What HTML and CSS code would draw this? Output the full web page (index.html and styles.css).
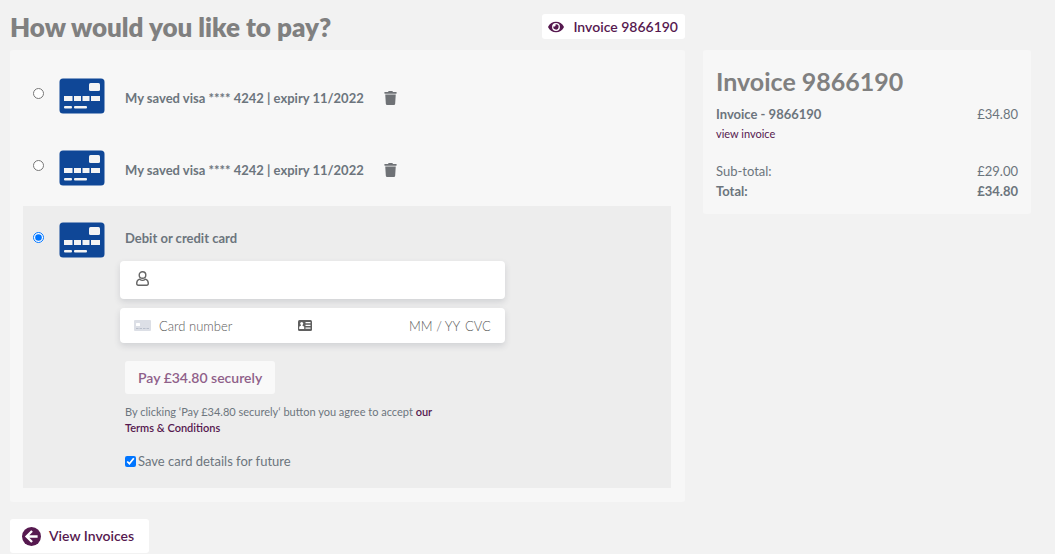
FILE: index.html
```html
<!DOCTYPE html>
<html lang="en">
<head>
  <meta charset="UTF-8" />
  <meta name="viewport" content="width=device-width, initial-scale=1.0" />
  <title>Pay invoice</title>
  <link rel="stylesheet" href="styles.css">
</head>
<body>
  <!-- shared icons -->
  <svg class="sprite" aria-hidden="true">
    <symbol id="icon-card" viewBox="0 0 46 36">
      <rect x="0.5" y="0.5" width="45" height="35" rx="3.5" fill="#0f4797" />
      <rect x="30" y="5" width="11" height="8" rx="1.5" fill="#f4f4f4" />
      <path d="M5 18h8.5v5H5zM15 18h7v5h-7zM23.500 18h7v5h-7zM32 18h9v5h-9z" fill="#f4f4f4" />
      <rect x="5" y="28" width="8" height="2.500" rx="1" fill="#f4f4f4" />
      <rect x="15" y="28" width="13" height="2.500" rx="1" fill="#f4f4f4" />
    </symbol>
    <symbol id="icon-trash" viewBox="0 0 448 512">
      <path fill="currentColor" d="M432 32H312l-9.400-18.700A24 24 0 0 0 281.100 0H166.800a23.720 23.720 0 0 0-21.400 13.300L136 32H16A16 16 0 0 0 0 48v32a16 16 0 0 0 16 16h416a16 16 0 0 0 16-16V48a16 16 0 0 0-16-16zM32 128l21.200 339a48 48 0 0 0 47.900 45h245.800a48 48 0 0 0 47.900-45L416 128z" />
    </symbol>
  </svg>

  <main class="page">
    <section class="payment">
      <header class="payment-header">
        <h1>How would you like to pay?</h1>
        <a href="#" class="btn btn-invoice">
          <svg class="icon-eye" viewBox="0 0 576 512" aria-hidden="true">
            <path fill="currentColor" d="M572.520 241.400C518.290 135.590 410.930 64 288 64S57.680 135.640 3.480 241.410a32.350 32.350 0 0 0 0 29.190C57.710 376.410 165.070 448 288 448s230.320-71.640 284.520-177.410a32.350 32.350 0 0 0 0-29.190zM288 400a144 144 0 1 1 144-144 143.930 143.930 0 0 1-144 144zm0-240a95.310 95.310 0 0 0-25.310 3.790 47.850 47.850 0 0 1-66.900 66.900A95.780 95.780 0 1 0 288 160z" />
          </svg>
          Invoice 9866190
        </a>
      </header>

      <form class="panel methods">
        <div class="method">
          <input type="radio" name="method" id="saved-1">
          <svg class="card-icon" aria-hidden="true"><use href="#icon-card" /></svg>
          <div class="method-body saved">
            <label for="saved-1">My saved visa **** 4242 | expiry 11/2022</label>
            <button type="button" class="delete" aria-label="Delete card"><svg><use href="#icon-trash" /></svg></button>
          </div>
        </div>

        <div class="method">
          <input type="radio" name="method" id="saved-2">
          <svg class="card-icon" aria-hidden="true"><use href="#icon-card" /></svg>
          <div class="method-body saved">
            <label for="saved-2">My saved visa **** 4242 | expiry 11/2022</label>
            <button type="button" class="delete" aria-label="Delete card"><svg><use href="#icon-trash" /></svg></button>
          </div>
        </div>

        <div class="method active">
          <input type="radio" name="method" id="new-card" checked>
          <svg class="card-icon" aria-hidden="true"><use href="#icon-card" /></svg>
          <div class="method-body">
            <label for="new-card" class="method-title">Debit or credit card</label>

            <div class="field field-name">
              <svg class="icon-user" viewBox="0 0 13 15" aria-hidden="true" fill="none" stroke="#666" stroke-width="1.4">
                <circle cx="6.500" cy="4" r="3.300" />
                <path d="M3.600 8.200C1.700 8.900.7 10.400.7 12.300c0 1.400.5 2 1.700 2h8.200c1.200 0 1.700-.6 1.700-2 0-1.900-1-3.400-2.900-4.100-1.700 1.400-4.100 1.400-5.800 0z" />
              </svg>
              <input type="text" aria-label="Name on card">
            </div>

            <div class="field field-card">
              <svg class="icon-mini-card" viewBox="0 0 17 11" aria-hidden="true">
                <rect width="17" height="11" rx="1" fill="#dcdfe6" />
                <rect x="2" y="3" width="4" height="3" rx="0.500" fill="#fff" />
                <path d="M2 8.500h13" stroke="#b9bfcc" stroke-dasharray="2.500 1" />
              </svg>
              <input type="text" class="number" placeholder="Card number" aria-label="Card number">
              <svg class="icon-id" viewBox="0 0 14 11" aria-hidden="true">
                <rect width="14" height="11" rx="1.500" fill="#5f5f5f" />
                <circle cx="3.700" cy="3.500" r="1.500" fill="#fff" />
                <path d="M3 4h1.400v1.600l1.800 1.200V9H1.200V6.800L3 5.600zM7.500 2h5v1.200h-5zM7.500 4.800h5V6h-5zM7.500 7.600h5v1.200h-5z" fill="#fff" />
              </svg>
              <input type="text" class="expiry" placeholder="MM / YY" aria-label="Expiry date">
              <input type="text" class="cvc" placeholder="CVC" aria-label="CVC">
            </div>

            <button type="submit" class="btn btn-pay" disabled>Pay £34.80 securely</button>
            <p class="terms">By clicking ‘Pay £34.80 securely‘ button you agree to accept <a href="#">our Terms &amp; Conditions</a></p>
            <div class="save">
              <input type="checkbox" id="save-card" checked>
              <label for="save-card">Save card details for future</label>
            </div>
          </div>
        </div>
      </form>

      <a href="#" class="btn btn-back">
        <svg class="icon-back" viewBox="0 0 18 18" aria-hidden="true">
          <circle cx="9" cy="9" r="9" fill="#56194f" />
          <path d="M9.500 3.800L4.300 9l5.200 5.200M4.800 9h10" fill="none" stroke="#fff" stroke-width="2.200" />
        </svg>
        View Invoices
      </a>
    </section>

    <aside class="panel summary">
      <h2>Invoice 9866190</h2>
      <div class="line"><strong>Invoice - 9866190</strong><span>£34.80</span></div>
      <a href="#" class="view">view invoice</a>
      <div class="line"><span>Sub-total:</span><span>£29.00</span></div>
      <div class="line"><strong>Total:</strong><strong>£34.80</strong></div>
    </aside>
  </main>
</body>
</html>
```
FILE: styles.css
```css
* { box-sizing: border-box; }
body {
  font-family: Lato, "Open Sans", sans-serif;
  font-size: 14px;
  line-height: 20px;
  margin: 0;
  background-color: #f2f2f2;
  color: #6c757d;
}
h1, h2, p { margin: 0; }
h1, h2 { color: #808080; }
a { color: #56194f; text-decoration: none; }
strong { font-weight: 700; }
input { font-family: inherit; margin: 0; }
.sprite { display: none; }

.page {
  display: grid;
  grid-template-columns: minmax(0, 1fr) 328px;
  align-items: start;
  gap: 18px;
  padding: 0 24px 0 10px;
}
.panel { background-color: #f7f7f7; border-radius: 3px; }

/* buttons */
.btn {
  display: inline-flex;
  align-items: center;
  background-color: #fff;
  color: #56194f;
  border: 0;
  border-radius: 3px;
  font-family: inherit;
  font-size: 14px;
  font-weight: 600;
}
.btn-invoice { height: 25px; padding: 0 7px 0 6px; gap: 9px; }
.icon-eye { width: 16px; height: 14px; }
.btn-back { height: 34px; padding: 0 15px 0 12px; gap: 8px; margin-top: 17px; }
.icon-back { width: 19px; height: 19px; }
.btn-pay {
  height: 33px;
  padding: 0 13px;
  margin: 18px 0 0 5px;
  background-color: #f9f9f9;
  color: #8f6089;
}

/* payment methods */
.payment-header {
  display: flex;
  justify-content: space-between;
  align-items: center;
  height: 50px;
  padding-top: 3px;
}
h1 { font-size: 26px; line-height: 34px; font-weight: 800; }
.methods { padding: 12px 14px 14px 13px; }
.method {
  display: flex;
  align-items: flex-start;
  min-height: 72px;
  padding: 16px 10px 0;
}
.method.active { background-color: #ededed; padding-bottom: 17px; }
input[type="radio"], input[type="checkbox"] { width: 11px; height: 11px; flex: none; }
.method > input { margin-top: 10px; }
.card-icon { width: 46px; height: 36px; margin: 0 15px; flex: none; }
.method-body { flex: 1; }
.method-body > label { font-weight: 700; padding-left: 5px; font-size: 13px; }
.saved { display: flex; align-items: center; padding-top: 10px; gap: 20px; }
.delete {
  display: flex;
  padding: 0;
  border: 0;
  background: none;
  color: #6f7276;
}
.delete svg { width: 13px; height: 14px; }
.method-title { display: block; padding-top: 6px; }

.field {
  display: flex;
  align-items: center;
  width: 100%;
  max-width: 385px;
  padding: 0 14px;
  background-color: #fff;
  border-radius: 4px;
  box-shadow: 0 3px 6px rgba(60, 66, 87, 0.16);
}
.field input {
  border: 0;
  padding: 0;
  background: none;
  font-size: 13px;
  font-weight: 300;
  min-width: 0;
  outline: none;
}
.field input::placeholder { color: #5c5c5c; opacity: 1; }
.field-name { height: 38px; margin-top: 13px; padding: 0 16px 4px; gap: 10px; }
.field-name input { flex: 1; }
.field-card { height: 35px; margin-top: 9px; }
.icon-user { width: 13px; height: 15px; }
.icon-mini-card { width: 17px; height: 11px; margin-right: 8px; }
.icon-id { width: 14px; height: 11px; margin-right: auto; }
.number { width: 139px; }
.expiry { width: 52px; margin-right: 4px; }
.cvc { width: 26px; }

.terms { max-width: 330px; padding-left: 5px; margin-top: 10px; font-size: 11px; line-height: 16px; }
.terms a { font-weight: 600; }
.save { display: flex; align-items: center; gap: 2px; margin-top: 15px; padding-left: 5px; font-size: 13px; }

/* invoice summary */
.summary { margin-top: 50px; padding: 13px 13px 13px; font-size: 13px; }
.summary h2 { font-size: 25px; line-height: 36px; font-weight: 700; margin-bottom: 5px; }
.line { display: flex; justify-content: space-between; }
.view { display: block; font-size: 11px; margin-bottom: 17px; }
```
